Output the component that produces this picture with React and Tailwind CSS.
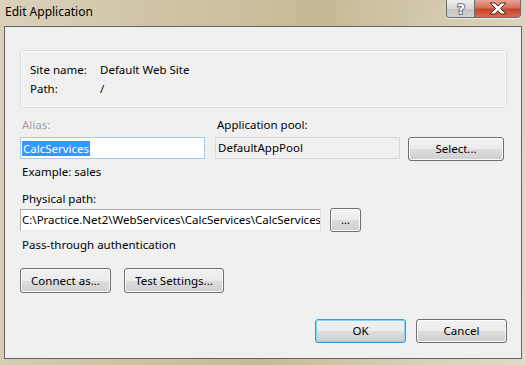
import React from 'react';

const Button = ({ children, width, height = 'h-[24px]', isDefault = false }) => (
  <div
    className={`${width} ${height} flex items-center justify-center rounded-[3px] border ${
      isDefault ? 'border-[#3c9ad6] shadow-[inset_0_0_0_1px_#7fd4f7]' : 'border-[#707070] shadow-[inset_0_0_0_1px_#fbfbfb]'
    } bg-[linear-gradient(#f2f2f2_0%,#ebebeb_50%,#dddddd_51%,#cfcfcf_100%)] text-black`}
  >
    {children}
  </div>
);

const TitleButtons = () => (
  <div className="ml-auto mr-[5px] flex h-[18px] overflow-hidden rounded-b-[4px] border border-t-0 border-[#6b6b6b] shadow-[0_1px_0_#ffffffa0]">
    <div className="flex w-[28px] items-center justify-center border-r border-[#6b6b6b] bg-[linear-gradient(#eeeeee,#d8d8d8_50%,#c4c4c4_51%,#d2d2d2)]">
      <svg width="14" height="15" viewBox="0 0 14 15">
        <text
          x="7"
          y="13"
          textAnchor="middle"
          fontFamily="'DejaVu Sans', sans-serif"
          fontWeight="bold"
          fontSize="14"
          fill="#ffffff"
          stroke="#4b5a70"
          strokeWidth="1.6"
          paintOrder="stroke"
        >
          ?
        </text>
      </svg>
    </div>
    <div className="flex w-[45px] items-center justify-center bg-[linear-gradient(#e8a493,#d3735c_45%,#c4432b_55%,#d86a4c)]">
      <svg width="20" height="13" viewBox="0 0 20 13">
        <path
          d="M2 1h5l3 3.2 3-3.2h5l-5.5 5.5 5.5 5.5h-5l-3-3.2-3 3.2H2l5.5-5.5z"
          fill="#ffffff"
          stroke="#4a2a24"
          strokeWidth="1"
          strokeLinejoin="round"
        />
      </svg>
    </div>
  </div>
);

const App = () => {
  return (
    <div className="flex h-[365px] w-[526px] flex-col bg-[linear-gradient(100deg,#dbd2bc_0%,#d0c5a8_25%,#c6b994_55%,#d4cab0_75%,#e2dbc9_100%)] font-['Noto_Sans',sans-serif] text-[11.5px] text-black">
      {/* ── Title bar ─────────────────────────────────────────── */}
      <div className="flex h-[26px] shrink-0 items-start">
        <span className="pl-[5px] pt-[4px] text-[12px] leading-[16px] text-black">Edit Application</span>
        <TitleButtons />
      </div>

      {/* ── Client area ───────────────────────────────────────── */}
      <div className="mx-[4px] mb-[6px] flex flex-1 flex-col border border-[#646464] bg-[#f0f0f0] pl-[15px] pr-[14px]">
        {/* Site info group */}
        <div className="mt-[23px] h-[58px] rounded-[3px] border border-[#d5dfe5] pl-[9px] pt-[9px] shadow-[inset_0_0_0_1px_#ffffff] leading-[19px]">
          <div className="flex">
            <span className="w-[70px]">Site name:</span>
            <span>Default Web Site</span>
          </div>
          <div className="flex">
            <span className="w-[70px]">Path:</span>
            <span>/</span>
          </div>
        </div>

        {/* Alias / Application pool */}
        <div className="mt-[9px] flex leading-[16px]">
          <span className="w-[195px] pl-[2px] text-[#a0a0a0]">Alias:</span>
          <span className="pl-[2px]">Application pool:</span>
        </div>
        <div className="mt-[4px] flex items-start">
          <div className="flex h-[22px] w-[185px] items-center border border-[#a9c6e2] bg-white pl-[1px]">
            <span className="bg-[#3399ff] px-[1px] leading-[15px] text-white">CalcServices</span>
          </div>
          <div className="ml-[10px] flex h-[22px] w-[185px] items-center border border-[#d9d9d9] bg-[#f0f0f0] pl-[2px]">
            DefaultAppPool
          </div>
          <div className="ml-[8px]">
            <Button width="w-[96px]">Select...</Button>
          </div>
        </div>

        <div className="mt-[3px] pl-[2px] leading-[16px]">Example: sales</div>

        {/* Physical path */}
        <div className="mt-[11px] pl-[2px] leading-[16px]">Physical path:</div>
        <div className="mt-[1px] flex items-center">
          <div className="flex h-[22px] w-[301px] items-center overflow-hidden whitespace-nowrap border border-[#abadb3] border-b-[#e3e9ef] border-r-[#dbdfe6] bg-white pl-[1px]">
            C:\Practice.Net2\WebServices\CalcServices\CalcServices
          </div>
          <div className="ml-[9px]">
            <Button width="w-[31px]">...</Button>
          </div>
        </div>

        <div className="mt-[5px] pl-[2px] leading-[16px]">Pass-through authentication</div>

        {/* Credentials buttons */}
        <div className="mt-[15px] flex gap-[13px]">
          <Button width="w-[91px]" height="h-[25px]">Connect as...</Button>
          <Button width="w-[100px]" height="h-[25px]">Test Settings...</Button>
        </div>

        {/* Dialog buttons */}
        <div className="mt-[26px] flex justify-end gap-[10px]">
          <Button width="w-[91px]" isDefault>OK</Button>
          <Button width="w-[91px]">Cancel</Button>
        </div>
      </div>
    </div>
  );
};

export default App;
